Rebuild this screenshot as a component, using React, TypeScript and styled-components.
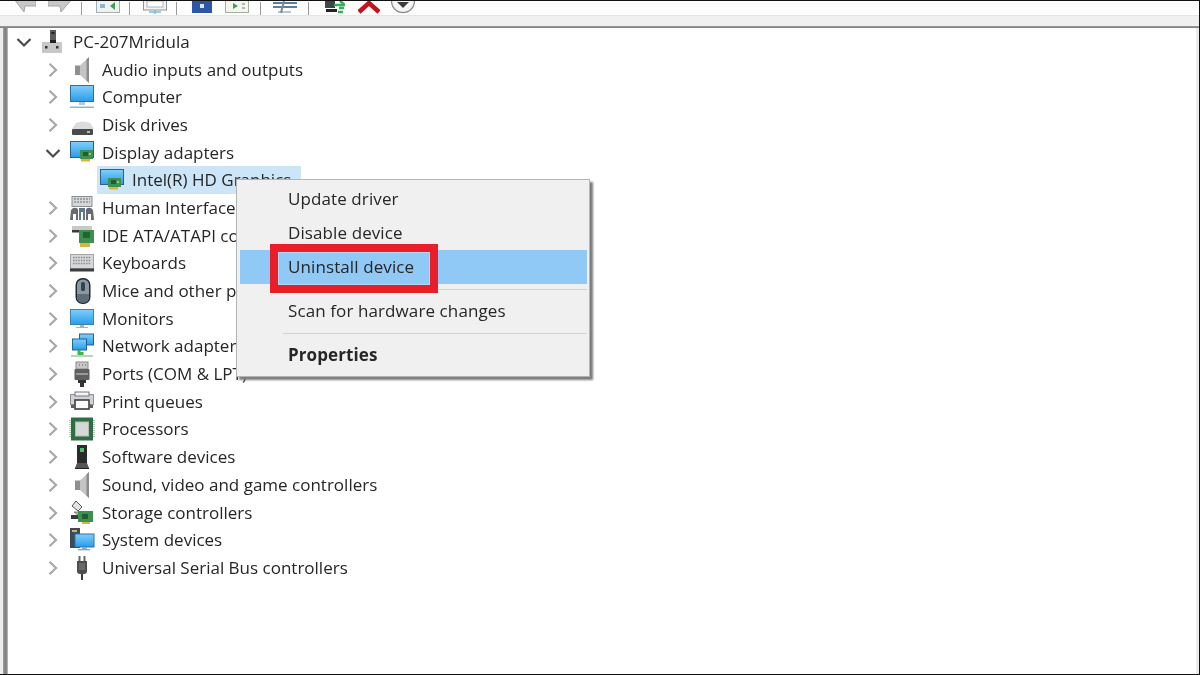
import React from "react";
import styled, { createGlobalStyle } from "styled-components";

const Global = createGlobalStyle`
  html, body { margin: 0; padding: 0; background: #fff; overflow: hidden; }
  #root { width: 1200px; height: 675px; }
`;

const Page = styled.div`
  position: relative;
  width: 1200px;
  height: 675px;
  box-sizing: border-box;
  display: flex;
  flex-direction: column;
  background: #fff;
  overflow: hidden;
  font-family: "Open Sans", "Noto Sans", sans-serif;
  color: #262626;
  border-top: 1px solid #111;
  border-right: 1px solid #111;
  border-bottom: 1px solid #111;
`;

const Soft = styled.div`
  display: flex;
  flex-direction: column;
  flex: 1;
  min-height: 0;
  filter: blur(0.55px);
`;

const Toolbar = styled.div`
  height: 14px;
  flex: none;
  display: flex;
  align-items: flex-end;
  overflow: hidden;
  background: #fdfdfd;
  padding-left: 14px;
`;

const ToolSlot = styled.div<{ $w: number; $gap: number }>`
  flex: none;
  width: ${(p) => p.$w}px;
  margin-right: ${(p) => p.$gap}px;
  height: 14px;
  display: flex;
  align-items: flex-end;
`;

const ToolSep = styled.div<{ $gap: number }>`
  flex: none;
  width: 1px;
  height: 13px;
  background: #9a9a9a;
  margin-right: ${(p) => p.$gap}px;
`;

const MenuBand = styled.div`
  height: 10px;
  flex: none;
  background: #f0f0f0;
  border-top: 1px solid #e4e4e4;
`;

const BandRule = styled.div`
  height: 2px;
  flex: none;
  background: linear-gradient(#9c9c9c, #7d7d7d);
`;

const Body = styled.div`
  flex: 1;
  min-height: 0;
  display: flex;
`;

const LeftEdge = styled.div`
  flex: none;
  width: 8px;
  background: linear-gradient(90deg, #eeeeee 0, #eeeeee 3px, #a4a4a4 3px, #7f7f7f 5px, #8c8c8c 7px, #d8d8d8 8px);
`;

const Tree = styled.div`
  flex: 1;
  min-width: 0;
  border-right: 3px solid #ebebeb;
`;

const Row = styled.div<{ $level: number }>`
  height: 27.7px;
  display: flex;
  align-items: center;
  padding-left: ${(p) => 8 + p.$level * 29}px;
  font-size: 17px;
  white-space: nowrap;
`;

const Twist = styled.span`
  flex: none;
  width: 16px;
  height: 16px;
  display: flex;
`;

const Entry = styled.span<{ $selected?: boolean }>`
  display: flex;
  align-items: center;
  height: 28px;
  padding: ${(p) => (p.$selected ? "0 10px 0 3px" : "0")};
  margin-left: ${(p) => (p.$selected ? "7px" : "9px")};
  background: ${(p) => (p.$selected ? "#cde6f7" : "transparent")};
`;

const IconBox = styled.span`
  flex: none;
  width: 24px;
  height: 24px;
  display: flex;
`;

const Label = styled.span`
  margin-left: 8px;
  line-height: 24px;
`;

const ContextMenu = styled.div`
  position: absolute;
  left: 236px;
  top: 178px;
  width: 354px;
  height: 198px;
  box-sizing: border-box;
  padding: 2px 2px 4px 3px;
  background: #f0f0f0;
  border: 1px solid #b4b4b4;
  box-shadow: 3px 3px 2px #7c7c7c;
  font-family: "Open Sans", "Noto Sans", sans-serif;
  font-size: 17px;
  color: #262626;
  filter: blur(0.45px);
`;

const MenuItem = styled.div<{ $active?: boolean; $bold?: boolean }>`
  height: 34px;
  box-sizing: border-box;
  display: flex;
  align-items: center;
  padding: 0 0 2px 48px;
  background: ${(p) => (p.$active ? "#90c8f6" : "transparent")};
  font-weight: ${(p) => (p.$bold ? 700 : 400)};
  letter-spacing: 0.1px;
  white-space: nowrap;
`;

const MenuSep = styled.div`
  height: 10px;
  margin-left: 43px;
  display: flex;
  align-items: center;
  &::after {
    content: "";
    flex: 1;
    height: 1px;
    background: #d2d2d2;
  }
`;

const RedBox = styled.div`
  position: absolute;
  left: 33px;
  top: 64px;
  width: 168px;
  height: 49px;
  box-sizing: border-box;
  border: 8px solid #e81e2a;
  box-shadow: inset 0 0 0 1px #b4d6f3;
`;

const Chevron = ({ open }: { open?: boolean }) => (
  <svg width="16" height="16" viewBox="0 0 16 16" fill="none">
    {open ? (
      <path d="M1.5 5 L8 11.5 L14.5 5" stroke="#4a4a4a" strokeWidth="2.2" />
    ) : (
      <path d="M4.5 1.8 L11 8 L4.5 14.2" stroke="#a8a8a8" strokeWidth="2.2" />
    )}
  </svg>
);

const Sky = () => (
  <linearGradient id="sky" x1="0" y1="0" x2="0" y2="1">
    <stop offset="0" stopColor="#7fd0fb" />
    <stop offset="1" stopColor="#2a9bea" />
  </linearGradient>
);

const Svg = ({ children }: { children: React.ReactNode }) => (
  <svg width="24" height="24" viewBox="0 0 24 24" style={{ overflow: "visible" }}>
    <defs>
      <Sky />
    </defs>
    {children}
  </svg>
);

const Board = ({ x, y }: { x: number; y: number }) => (
  <g transform={`translate(${x} ${y})`}>
    <rect x="0" y="0" width="13" height="9" fill="#3f8f4e" />
    <rect x="3" y="2" width="5" height="4" fill="#1d5f34" />
    <rect x="9" y="3" width="2" height="2" fill="#9ac77a" />
    <rect x="1" y="9" width="9" height="2.5" fill="#d9b53d" />
  </g>
);

const Speaker = () => (
  <Svg>
    <path d="M5 7.5 L10 7.5 L10 17 L5 17 Z" fill="#8f8f8f" />
    <path d="M10 7.5 L19 -1 L19 25 L10 17 Z" fill="#c4c4c4" />
    <path d="M16.5 1.5 L19 -1 L19 25 L16.5 22.5 Z" fill="#8c8c8c" />
  </Svg>
);

const Monitor = () => (
  <Svg>
    <rect x="0.5" y="0.5" width="23" height="16" fill="url(#sky)" stroke="#2f6f9e" />
    <rect x="9" y="17" width="6" height="3" fill="#b8c9d6" />
    <rect x="0" y="21.5" width="24" height="1.5" fill="#8ab6d4" />
  </Svg>
);

const WideMonitor = () => (
  <Svg>
    <rect x="0.5" y="2.5" width="23" height="15" fill="url(#sky)" stroke="#3b82b5" />
    <rect x="10" y="18" width="4" height="2" fill="#9fb4c4" />
    <rect x="6" y="20" width="12" height="1" fill="#9fb4c4" />
  </Svg>
);

const Disk = () => (
  <Svg>
    <path d="M6 10 Q13 7 20 10 L24 16 L2 16 Z" fill="#dcdcdc" />
    <rect x="2" y="16" width="21" height="6" rx="1" fill="#4a4a4a" />
    <rect x="17" y="18" width="3" height="2" fill="#a9c99a" />
  </Svg>
);

const Adapter = () => (
  <Svg>
    <rect x="0.5" y="0.5" width="23" height="16" fill="url(#sky)" stroke="#2f5f84" />
    <Board x={10} y={9} />
  </Svg>
);

const AdapterChild = () => (
  <Svg>
    <rect x="0.5" y="1.5" width="23" height="15" fill="url(#sky)" stroke="#2f5f84" />
    <Board x={8} y={10} />
  </Svg>
);

const Hid = () => (
  <Svg>
    <rect x="2" y="0.5" width="20" height="10" fill="#d4d6d8" stroke="#8c8f92" />
    <path d="M4 3h16M4 6h16" stroke="#8f9296" strokeWidth="1.4" strokeDasharray="2 1" />
    <path d="M0 24 L1 14 Q4 10 8 13 L8 24 H6 V18 H3 V24 Z" fill="#666b72" />
    <path d="M9 12 H15 V24 H13 V16 H11 V24 H9 Z" fill="#5f7588" />
    <path d="M16 13 Q20 10 23 14 L24 24 H21 V18 H18 V24 H16 Z" fill="#666b72" />
  </Svg>
);

const Ide = () => (
  <Svg>
    <path d="M2 2 H22 V6 H2 Z" fill="#c9c9c9" />
    <rect x="2" y="6" width="8" height="2.5" fill="#3a3a3a" />
    <rect x="9" y="6" width="15" height="13" fill="#3d8f4e" />
    <rect x="13" y="8" width="7" height="6" fill="#1f6636" />
    <rect x="10" y="19" width="10" height="4" fill="#d9b53d" />
  </Svg>
);

const Keyboard = () => (
  <Svg>
    <rect x="0.5" y="3.5" width="23" height="14" fill="#d6d8da" stroke="#a3a5a8" />
    <path d="M3 6.5h18M3 9.5h18M3 12.5h18" stroke="#8e9194" strokeWidth="1.5" strokeDasharray="1.6 1" />
    <rect x="0" y="17.5" width="24" height="3" fill="#3d3d3d" />
  </Svg>
);

const Mouse = () => (
  <Svg>
    <rect x="5.5" y="-1" width="15" height="26" rx="7" fill="#1f2a33" />
    <rect x="7" y="0.5" width="12" height="23" rx="5.5" fill="#8a98a6" />
    <rect x="11" y="3" width="4" height="9" rx="1.5" fill="#39424c" />
    <path d="M7 15 H19 V18 Q19 23.5 13 23.5 Q7 23.5 7 18 Z" fill="#5e6b78" />
  </Svg>
);

const Network = () => (
  <Svg>
    <rect x="9.5" y="0" width="14" height="11" fill="url(#sky)" stroke="#20649a" />
    <rect x="2.5" y="5" width="14" height="11" fill="url(#sky)" stroke="#20649a" />
    <path d="M9 16 V21 M12 18 V21" stroke="#3fb54a" strokeWidth="3" />
    <rect x="1" y="21" width="22" height="2" fill="#b8d6b0" />
  </Svg>
);

const Port = () => (
  <Svg>
    <rect x="6" y="0" width="12" height="7" fill="#c8c8c8" stroke="#8a8a8a" />
    <path d="M9 3h1M12 3h1M15 3h1" stroke="#555" />
    <rect x="4.5" y="7" width="15" height="11" rx="1" fill="#5f5f5f" />
    <rect x="6" y="11" width="12" height="2" fill="#9a9a9a" />
    <path d="M8 18 H16 V21 H14 V25 H10 V21 H8 Z" fill="#333" />
  </Svg>
);

const Printer = () => (
  <Svg>
    <rect x="0.5" y="4.5" width="23" height="10" fill="#cfd3d6" stroke="#8d9196" />
    <rect x="5" y="2" width="14" height="4" fill="#f4f4f4" stroke="#777" />
    <rect x="5" y="10" width="14" height="9" fill="#fafafa" stroke="#3d3d3d" strokeWidth="1.6" />
    <rect x="1" y="15" width="4" height="3" fill="#5c5c5c" />
    <rect x="19" y="15" width="4" height="3" fill="#5c5c5c" />
  </Svg>
);

const Chip = () => (
  <Svg>
    <rect x="1" y="0.5" width="22" height="23" fill="#2f6e44" />
    <rect x="5.5" y="5" width="13" height="14" fill="#d4d9d6" stroke="#b5bcb8" />
    <path d="M0 3V21M24 3V21" stroke="#7ca685" strokeWidth="1.2" strokeDasharray="1 1" />
  </Svg>
);

const Tower = () => (
  <Svg>
    <rect x="7" y="0" width="10" height="18" fill="#2b2b2b" />
    <rect x="10" y="3" width="4" height="4" fill="#4fc06a" />
    <path d="M7 18 H17 L19 23 H5 Z" fill="#555" />
    <rect x="5" y="23" width="14" height="1" fill="#222" />
  </Svg>
);

const Storage = () => (
  <Svg>
    <path d="M6 0 L12 6 L8 10 L2 5 Z" fill="#e4e4e4" stroke="#555" />
    <path d="M4 11 L14 11 L9 15 Z" fill="#b5b5b5" stroke="#666" strokeWidth="0.7" />
    <rect x="1" y="14" width="8" height="4" fill="#3a3a3a" />
    <rect x="8" y="10" width="15" height="11" fill="#3f8f4e" />
    <rect x="12" y="13" width="6" height="5" fill="#1c5f34" />
    <rect x="12" y="21" width="8" height="2" fill="#d9b53d" />
  </Svg>
);

const SystemDev = () => (
  <Svg>
    <rect x="0" y="0" width="10" height="20" fill="#3b4a54" />
    <rect x="2" y="2" width="5" height="2" fill="#c9b26a" />
    <rect x="5" y="6" width="19" height="13" fill="url(#sky)" stroke="#2a75aa" />
    <rect x="12" y="19" width="5" height="2" fill="#8fa9bc" />
    <rect x="8" y="21" width="12" height="1.4" fill="#8fa9bc" />
  </Svg>
);

const UsbPlug = () => (
  <Svg>
    <path d="M9.5 0 V5 M14.5 0 V5" stroke="#666" strokeWidth="2" />
    <path d="M7 5 H17 V15 Q17 18 14 18 H10 Q7 18 7 15 Z" fill="#4d4d4d" />
    <rect x="9" y="7" width="6" height="7" fill="#6a6a6a" />
    <path d="M11 18 H13 V24 H11 Z" fill="#3a3a3a" />
  </Svg>
);

const ComputerRoot = () => (
  <Svg>
    <rect x="9" y="0" width="6" height="12" fill="#5c5c5c" />
    <rect x="10.5" y="2" width="3" height="2" fill="#222" />
    <rect x="1" y="12" width="20" height="11" fill="#c8c8c8" />
    <rect x="4" y="16" width="2.5" height="2.5" fill="#333" />
    <rect x="15" y="16" width="2.5" height="2.5" fill="#333" />
    <rect x="9" y="10" width="6" height="3" fill="#222" />
  </Svg>
);

const tools: { w: number; gap: number; node: React.ReactNode }[] = [
  { w: 22, gap: 12, node: (
    <svg width="22" height="14" viewBox="0 0 22 14"><path d="M0 -2 L10 11 L11 5 H22 V-2 Z" fill="#c8c8c8" stroke="#a6a6a6" /></svg>
  ) },
  { w: 24, gap: 9, node: (
    <svg width="24" height="14" viewBox="0 0 24 14"><path d="M24 -2 L13 11 L12 5 H0 V-2 Z" fill="#c8c8c8" stroke="#a6a6a6" /></svg>
  ) },
  { w: 0, gap: 14, node: "sep" },
  { w: 24, gap: 9, node: (
    <svg width="24" height="14" viewBox="0 0 24 14"><rect x="0.5" y="-2" width="23" height="13.5" fill="#eef3f2" stroke="#a3aeb8" /><rect x="4" y="3" width="5" height="4" fill="#8fb8d0" /><path d="M14 5 L19 1 V9 Z" fill="#3ea055" /></svg>
  ) },
  { w: 0, gap: 13, node: "sep" },
  { w: 24, gap: 9, node: (
    <svg width="24" height="14" viewBox="0 0 24 14"><rect x="0.5" y="-2" width="23" height="11" fill="#f3f3f3" stroke="#8b949c" /><rect x="4" y="0" width="16" height="6" fill="#fff" stroke="#aab4bd" /><path d="M6 11 H18 M12 9V13" stroke="#7dbbe3" strokeWidth="1.5" /></svg>
  ) },
  { w: 0, gap: 15, node: "sep" },
  { w: 20, gap: 13, node: (
    <svg width="20" height="14" viewBox="0 0 20 14"><rect x="0" y="-2" width="20" height="14" fill="#2d55a8" /><rect x="8" y="3" width="4" height="4" fill="#dfe7f6" /></svg>
  ) },
  { w: 24, gap: 11, node: (
    <svg width="24" height="14" viewBox="0 0 24 14"><rect x="0.5" y="-2" width="23" height="13.5" fill="#f4f6ee" stroke="#a3ad9e" /><path d="M8 2 L13 5 L8 8 Z" fill="#3ea055" /><path d="M17 3h3M17 7h3" stroke="#778" /></svg>
  ) },
  { w: 0, gap: 12, node: "sep" },
  { w: 24, gap: 11, node: (
    <svg width="24" height="14" viewBox="0 0 24 14"><path d="M0 2 H24 M0 6 H24" stroke="#5b7f9f" strokeWidth="2" /><path d="M5 11 H18" stroke="#b8c4cf" strokeWidth="2" /><path d="M11 0 L8 12" stroke="#7d8c98" strokeWidth="2" /></svg>
  ) },
  { w: 0, gap: 16, node: "sep" },
  { w: 20, gap: 13, node: (
    <svg width="20" height="14" viewBox="0 0 20 14"><rect x="0" y="0" width="10" height="7" fill="#3f4648" /><rect x="1" y="8" width="11" height="3" fill="#222" /><path d="M9 4 H20 L15 0 M14 7 H19 M13 11 H18" stroke="#35b05a" strokeWidth="2.4" fill="none" /></svg>
  ) },
  { w: 22, gap: 11, node: (
    <svg width="22" height="14" viewBox="0 0 22 14"><path d="M1 11 L11 2 L21 11" stroke="#c3141e" strokeWidth="4.5" fill="none" /></svg>
  ) },
  { w: 24, gap: 0, node: (
    <svg width="24" height="14" viewBox="0 0 24 14"><circle cx="12" cy="0" r="11.5" fill="#f5f5f5" stroke="#8f8f8f" strokeWidth="1.4" /><path d="M6 1 H18 L12 7 Z" fill="#3c3c3c" /></svg>
  ) },
];

type Item = { label: string; icon: React.ReactNode; level?: number; open?: boolean; leaf?: boolean; selected?: boolean };

const items: Item[] = [
  { label: "PC-207Mridula", icon: <ComputerRoot />, level: 0, open: true },
  { label: "Audio inputs and outputs", icon: <Speaker /> },
  { label: "Computer", icon: <Monitor /> },
  { label: "Disk drives", icon: <Disk /> },
  { label: "Display adapters", icon: <Adapter />, open: true },
  { label: "Intel(R) HD Graphics", icon: <AdapterChild />, level: 2, leaf: true, selected: true },
  { label: "Human Interface Devices", icon: <Hid /> },
  { label: "IDE ATA/ATAPI controllers", icon: <Ide /> },
  { label: "Keyboards", icon: <Keyboard /> },
  { label: "Mice and other pointing devices", icon: <Mouse /> },
  { label: "Monitors", icon: <WideMonitor /> },
  { label: "Network adapters", icon: <Network /> },
  { label: "Ports (COM & LPT)", icon: <Port /> },
  { label: "Print queues", icon: <Printer /> },
  { label: "Processors", icon: <Chip /> },
  { label: "Software devices", icon: <Tower /> },
  { label: "Sound, video and game controllers", icon: <Speaker /> },
  { label: "Storage controllers", icon: <Storage /> },
  { label: "System devices", icon: <SystemDev /> },
  { label: "Universal Serial Bus controllers", icon: <UsbPlug /> },
];

export default function App() {
  return (
    <Page>
      <Global />
      <Soft>
        <Toolbar>
          {tools.map((t, i) =>
            t.node === "sep" ? (
              <ToolSep key={i} $gap={t.gap} />
            ) : (
              <ToolSlot key={i} $w={t.w} $gap={t.gap}>
                {t.node}
              </ToolSlot>
            )
          )}
        </Toolbar>
        <MenuBand />
        <BandRule />
        <Body>
          <LeftEdge />
          <Tree>
            {items.map((it) => (
              <Row key={it.label} $level={it.level ?? 1}>
                <Twist>{!it.leaf && <Chevron open={it.open} />}</Twist>
                <Entry $selected={it.selected}>
                  <IconBox>{it.icon}</IconBox>
                  <Label>{it.label}</Label>
                </Entry>
              </Row>
            ))}
          </Tree>
        </Body>
      </Soft>
      <ContextMenu>
        <MenuItem>Update driver</MenuItem>
        <MenuItem>Disable device</MenuItem>
        <MenuItem $active>Uninstall device</MenuItem>
        <MenuSep />
        <MenuItem>Scan for hardware changes</MenuItem>
        <MenuSep />
        <MenuItem $bold>Properties</MenuItem>
        <RedBox />
      </ContextMenu>
    </Page>
  );
}
